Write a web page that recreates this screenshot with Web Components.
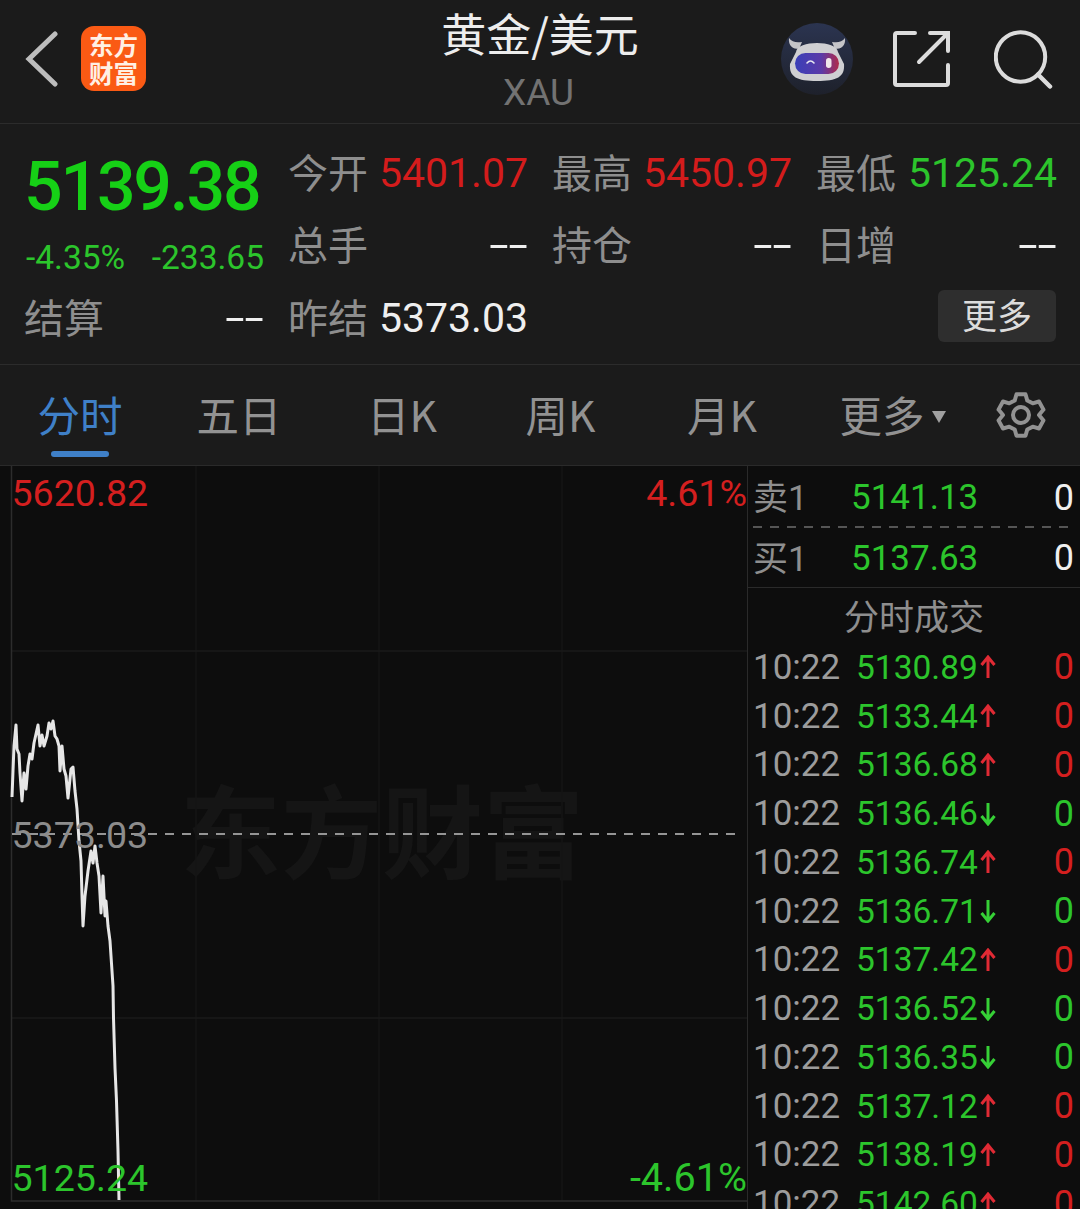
<!DOCTYPE html>
<html>
<head>
<meta charset="utf-8">
<style>
  html, body { margin: 0; padding: 0; background: #0d0d0d; }
  body { width: 1080px; height: 1209px; overflow: hidden; font-family: Roboto, "Noto Sans CJK SC", sans-serif; }
</style>
</head>
<body>
<quote-page></quote-page>
<script>
const CJK = 'Roboto, "Noto Sans CJK SC", sans-serif';

class TopBar extends HTMLElement {
  constructor() {
    super();
    this.attachShadow({ mode: "open" });
    this.shadowRoot.innerHTML = `
      <style>
        :host { display: flex; align-items: center; height: 124px; box-sizing: border-box; background: #1b1b1b; border-bottom: 1px solid #2c2c2c; padding-bottom: 6px; font-family: ${CJK}; }
        .left { width: 300px; display: flex; align-items: center; padding-left: 24px; box-sizing: border-box; gap: 21px; }
        .logo { width: 65px; height: 65px; border-radius: 13px; background: #fa5a14; display: flex; align-items: center; justify-content: center; }
        .logo span { width: 50px; color: #fff0e4; font: 700 24.5px/28px "Noto Sans CJK SC", sans-serif; text-align: center; word-break: break-all; }
        .title { flex: 1; align-self: flex-start; text-align: center; padding-top: 7px; }
        .name { color: #ededed; font-size: 45px; line-height: 52px; font-family: "Noto Sans CJK SC", sans-serif; }
        .code { color: #727272; font-size: 37px; line-height: 40px; margin-top: 14px; margin-right: 3px; }
        .right { width: 300px; display: flex; align-items: center; justify-content: flex-end; padding-right: 26px; box-sizing: border-box; gap: 38px; }
        .share { margin-right: 4px; }
        svg { display: block; }
      </style>
      <div class="left">
        <svg width="36" height="56" viewBox="0 0 36 56"><path d="M31 3 L5 28 L31 53" fill="none" stroke="#bdbdbd" stroke-width="5" stroke-linecap="round"/></svg>
        <div class="logo"><span>东方财富</span></div>
      </div>
      <div class="title"><div class="name">黄金/美元</div><div class="code">XAU</div></div>
      <div class="right">
        <svg width="74" height="74" viewBox="0 0 74 74">
          <defs>
            <linearGradient id="v" x1="0" x2="1"><stop offset="0" stop-color="#3a3fb8"/><stop offset="0.6" stop-color="#5b3aa8"/><stop offset="1" stop-color="#b02a4a"/></linearGradient>
            <linearGradient id="bg" x1="0" x2="0" y1="0" y2="1"><stop offset="0" stop-color="#2b3450"/><stop offset="1" stop-color="#1e212b"/></linearGradient>
          </defs>
          <circle cx="37" cy="37" r="36" fill="url(#bg)"/>
          <path d="M9 16 C8 24 13 27 19 27 L22 20 C16 21 12 20 9 16Z M65 16 C66 24 61 27 55 27 L52 20 C58 21 62 20 65 16Z" fill="#c4c4c8"/>
          <path d="M16 30 C17 18 57 18 58 30 L64 42 C65 55 57 59 37 59 C17 59 9 55 10 42Z" fill="#cfcfd2"/>
          <rect x="15" y="31" width="44" height="21" rx="10.5" fill="url(#v)"/>
          <path d="M27 41 q3.5 -4 7 0" fill="none" stroke="#e7e7f0" stroke-width="1.6" stroke-linecap="round"/>
          <rect x="46" y="36" width="5.5" height="10" rx="2.7" fill="#f1e6ea"/>
        </svg>
        <svg class="share" width="60" height="60" viewBox="0 0 60 60"><path d="M23 4 H5 a2 2 0 0 0 -2 2 V54 a2 2 0 0 0 2 2 H54 a2 2 0 0 0 2 -2 V36 M27 33 L56 4 M38 4 H56 V22" fill="none" stroke="#dcdcdc" stroke-width="4" stroke-linecap="round"/></svg>
        <svg width="60" height="60" viewBox="0 0 60 60"><circle cx="26.5" cy="28" r="24.7" fill="none" stroke="#dcdcdc" stroke-width="4"/><path d="M44 45.5 L56 57.5" stroke="#dcdcdc" stroke-width="4.5" stroke-linecap="round"/></svg>
      </div>
    `;
  }
}
customElements.define("top-bar", TopBar);

class StatCell extends HTMLElement {
  constructor() {
    super();
    this.attachShadow({ mode: "open" });
    this.shadowRoot.innerHTML = `
      <style>
        :host { display: flex; justify-content: space-between; align-items: center; height: 72px; font-family: ${CJK}; }
        .label { color: #8e8e8e; font: 40px "Noto Sans CJK SC", sans-serif; margin-left: -2px; }
        .val { font-size: 41px; font-family: Roboto, sans-serif; padding-top: 4px; }
        :host([c="r"]) .val { color: #d41c1c; }
        :host([c="g"]) .val { color: #2cc52c; }
        :host([c="w"]) .val { color: #efefef; }
        :host([c="n"]) .val { color: #efefef; display: inline-block; transform: scaleX(1.7); transform-origin: right; }
      </style>
      <span class="label"></span><span class="val"></span>
    `;
  }
  connectedCallback() {
    this.shadowRoot.querySelector(".label").textContent = this.getAttribute("label");
    this.shadowRoot.querySelector(".val").textContent = this.getAttribute("val");
  }
}
customElements.define("stat-cell", StatCell);

class StatPanel extends HTMLElement {
  constructor() {
    super();
    this.attachShadow({ mode: "open" });
    this.shadowRoot.innerHTML = `
      <style>
        :host { display: grid; grid-template-columns: 238px 238px 238px 239px; column-gap: 26px; grid-auto-rows: 72.5px; align-items: center; box-sizing: border-box; height: 241px; padding: 10.5px 24px 0 26px; background: #1b1b1b; border-bottom: 1px solid #2c2c2c; }
        .main { grid-row: span 2; align-self: stretch; }
        .price { color: #16d016; font: 500 68px/76px Roboto, sans-serif; letter-spacing: -2.2px; padding-top: 14px; margin-left: -2px; }
        .sub { display: flex; justify-content: space-between; color: #2cc52c; font: 33.5px/40px Roboto, sans-serif; margin-top: 13px; }
        .more { justify-self: end; margin-right: 1px; width: 118px; height: 52px; background: #2e2e2e; border-radius: 6px; color: #dcdcdc; font: 35px/48px "Noto Sans CJK SC", sans-serif; text-align: center; }
      </style>
      <div class="main">
        <div class="price">5139.38</div>
        <div class="sub"><span>-4.35%</span><span>-233.65</span></div>
      </div>
      <stat-cell label="今开" val="5401.07" c="r"></stat-cell>
      <stat-cell label="最高" val="5450.97" c="r"></stat-cell>
      <stat-cell label="最低" val="5125.24" c="g"></stat-cell>
      <stat-cell label="总手" val="--" c="n"></stat-cell>
      <stat-cell label="持仓" val="--" c="n"></stat-cell>
      <stat-cell label="日增" val="--" c="n"></stat-cell>
      <stat-cell label="结算" val="--" c="n"></stat-cell>
      <stat-cell label="昨结" val="5373.03" c="w"></stat-cell>
      <span></span>
      <div class="more">更多</div>
    `;
  }
}
customElements.define("stat-panel", StatPanel);

class TabBar extends HTMLElement {
  constructor() {
    super();
    this.attachShadow({ mode: "open" });
    const tabs = ["分时", "五日", "日K", "周K", "月K"];
    this.shadowRoot.innerHTML = `
      <style>
        :host { display: grid; grid-template-columns: 160px 158px 168px 149px 174px 167px 1fr; align-items: center; height: 100px; box-sizing: border-box; background: #1b1b1b; font-family: ${CJK}; }
        .tab { position: relative; text-align: center; color: #929292; font: 42.5px/98px "Noto Sans CJK SC", sans-serif; height: 100px; white-space: nowrap; }
        .on { color: #3f80c8; }
        .on::after { content: ""; position: absolute; left: 50%; bottom: 8px; width: 58px; height: 6px; margin-left: -29px; border-radius: 3px; background: #3f80c8; }
        .caret { display: inline-block; vertical-align: 9px; margin-left: 7px; width: 0; height: 0; border: 7px solid transparent; border-top: 12px solid #a0a0a0; border-bottom: 0; }
        svg { display: block; margin-left: 20px; }
      </style>
      ${tabs.map((t, i) => `<div class="tab${i === 0 ? " on" : ""}">${t}</div>`).join("")}
      <div class="tab">更多<span class="caret"></span></div>
      <svg width="50" height="50" viewBox="0 0 50 50">
        <path d="M20 2 H30 L32 9 L38 12 L45 10 L50 19 L45 25 L50 31 L45 40 L38 38 L32 41 L30 48 H20 L18 41 L12 38 L5 40 L0 31 L5 25 L0 19 L5 10 L12 12 L18 9 Z" transform="translate(2.5 2.5) scale(0.9)" fill="none" stroke="#929292" stroke-width="4.4" stroke-linejoin="round"/>
        <circle cx="25" cy="25" r="8" fill="none" stroke="#929292" stroke-width="4"/>
      </svg>
    `;
  }
}
customElements.define("tab-bar", TabBar);

class PriceChart extends HTMLElement {
  constructor() {
    super();
    this.attachShadow({ mode: "open" });
    const pts = "12,796 13,770 14,745 16,724 17,748 19,753 20,772 22,800 24,772 26,788 28,765 30,753 32,758 34,742 38,724 40,745 42,734 44,745 47,735 49,722 51,728 53,720 55,735 57,738 59,745 60,770 62,745 64,768 66,775 68,797 71,768 73,766 75,790 77,808 79,840 81,860 82,895 83,925 85,895 88,870 91,850 93,862 95,845 97,862 99,875 101,912 103,875 105,915 106,900 108,925 110,940 111,955 113,985 113.5,1017 115,1067 116.5,1100 118,1150 119,1199";
    this.shadowRoot.innerHTML = `
      <style>
        :host { display: block; position: relative; flex: 1; height: 744px; background: #0d0d0d; font-family: Roboto, sans-serif; overflow: hidden; }
        svg { position: absolute; left: 0; top: 0; }
        .mark { position: absolute; font-size: 37.6px; line-height: 44px; white-space: nowrap; }
        .wm { position: absolute; left: 180px; top: 301px; color: #151515; font: 700 101px/120px "Noto Sans CJK SC", sans-serif; white-space: nowrap; }
      </style>
      <div class="wm">东方财富</div>
      <svg width="747" height="744" viewBox="0 465 747 744">
        <path d="M196 465 V1200 M379 465 V1200 M562 465 V1200" fill="none" stroke="#151515" stroke-width="1.5"/>
        <path d="M12 650 H747 M12 1017 H747" fill="none" stroke="#1a1a1a" stroke-width="1.5"/>
        <path d="M11.5 465 V1200 H747" fill="none" stroke="#2c2c2c" stroke-width="1.5"/>
        <path d="M12 833 H741" stroke="#959595" stroke-width="2" stroke-dasharray="9 8"/>
        <polyline points="${pts}" fill="none" stroke="#e6e6e6" stroke-width="3" stroke-linejoin="round"/>
      </svg>
      <span class="mark" style="left:11.5px;top:5px;color:#d41f1f">5620.82</span>
      <span class="mark" style="right:0;top:5px;color:#d41f1f">4.61%</span>
      <span class="mark" style="left:11.5px;top:347px;color:#8c8c8c">5373.03</span>
      <span class="mark" style="left:11.5px;top:690px;color:#2cc52c">5125.24</span>
      <span class="mark" style="right:0;top:690px;color:#2cc52c;font-size:39.6px">-4.61%</span>
    `;
  }
}
customElements.define("price-chart", PriceChart);

class TradePanel extends HTMLElement {
  constructor() {
    super();
    this.attachShadow({ mode: "open" });
    const trades = [
      ["5130.89", 1], ["5133.44", 1], ["5136.68", 1], ["5136.46", 0], ["5136.74", 1], ["5136.71", 0],
      ["5137.42", 1], ["5136.52", 0], ["5136.35", 0], ["5137.12", 1], ["5138.19", 1], ["5142.60", 1]
    ];
    const arrow = (up) => `<svg width="16" height="24" viewBox="0 0 16 24"><path d="${up ? "M8 23 V3 M1.5 10 L8 2 L14.5 10" : "M8 1 V21 M1.5 14 L8 22 L14.5 14"}" fill="none" stroke="${up ? "#e02a34" : "#36d036"}" stroke-width="3"/></svg>`;
    this.shadowRoot.innerHTML = `
      <style>
        :host { display: block; width: 333px; height: 744px; box-sizing: border-box; border-left: 1px solid #2a2a2a; background: #0d0d0d; overflow: hidden; font-family: ${CJK}; }
        .level { display: flex; align-items: center; box-sizing: border-box; height: 61px; padding: 2px 6px 0 5px; font-size: 35px; }
        .level.buy { height: 60px; padding-top: 2px; }
        .level .k { width: 98px; color: #8e8e8e; margin-top: -6px; }
        .level .p { flex: 1; color: #2cc52c; }
        .level .q { color: #efefef; font-size: 36px; }
        .dash { margin: -1px 7px -1px 5px; height: 2px; background: repeating-linear-gradient(90deg, #555 0 9px, transparent 9px 17px); }
        .title { border-top: 1px solid #2a2a2a; height: 55px; color: #8e8e8e; font: 35px/53px "Noto Sans CJK SC", sans-serif; text-align: center; }
        .row { display: flex; align-items: center; height: 48.75px; padding: 0 6px 0 5px; font-size: 33.5px; }
        .t { width: 103px; color: #9c9c9c; font-size: 35px; }
        .p { color: #2cc52c; }
        .row svg { margin-left: 2px; display: block; }
        .q { margin-left: auto; font-size: 36px; }
        .up { color: #d41f1f; }
        .dn { color: #2cc52c; }
      </style>
      <div class="level"><span class="k">卖1</span><span class="p">5141.13</span><span class="q">0</span></div>
      <div class="dash"></div>
      <div class="level buy"><span class="k">买1</span><span class="p">5137.63</span><span class="q">0</span></div>
      <div class="title">分时成交</div>
      ${trades.map((r) => `<div class="row"><span class="t">10:22</span><span class="p">${r[0]}</span>${arrow(r[1])}<span class="q ${r[1] ? "up" : "dn"}">0</span></div>`).join("")}
    `;
  }
}
customElements.define("trade-panel", TradePanel);

class QuotePage extends HTMLElement {
  constructor() {
    super();
    this.attachShadow({ mode: "open" });
    this.shadowRoot.innerHTML = `
      <style>
        :host { display: block; width: 1080px; height: 1209px; overflow: hidden; background: #0d0d0d; }
        .body { display: flex; border-top: 1px solid #2a2a2a; }
      </style>
      <top-bar></top-bar>
      <stat-panel></stat-panel>
      <tab-bar></tab-bar>
      <div class="body"><price-chart></price-chart><trade-panel></trade-panel></div>
    `;
  }
}
customElements.define("quote-page", QuotePage);
</script>
</body>
</html>
